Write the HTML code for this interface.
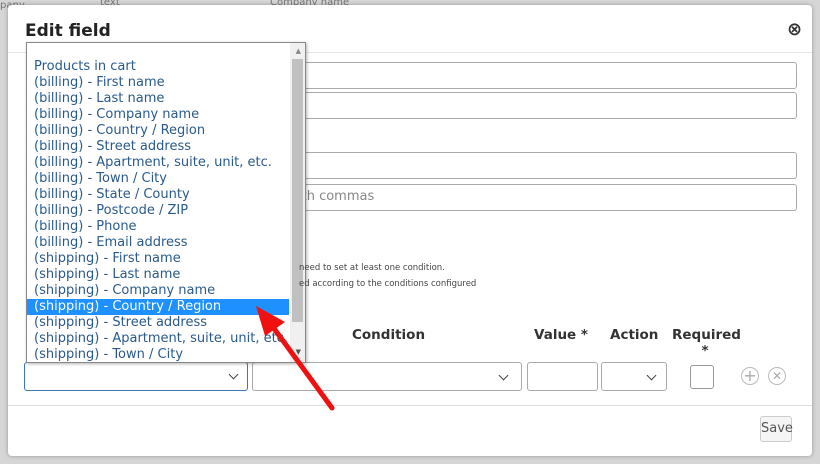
<html><head><style>
body{margin:0;width:820px;height:464px;background:#d6d6d6;font-family:"DejaVu Sans","Liberation Sans",sans-serif;position:relative;overflow:hidden}
.a{position:absolute}
.modal{left:8px;top:5px;width:804px;height:451px;background:#fff;border-radius:4px;box-shadow:0 0 4px rgba(0,0,0,.3)}
.inp{border:1px solid #aaa;border-radius:3px;background:#fff;height:25px}
.list{left:26px;top:42px;width:278px;height:319px;background:#fff;border:1px solid #888;box-shadow:1px 1px 3px rgba(0,0,0,.3);overflow:hidden}
.it{position:absolute;left:0;width:255px;padding-left:7px;height:16px;line-height:16px;font-size:13px;color:#2a5a8a;white-space:nowrap}
.sel{background:#1e90ff;color:#fff}
.h{font-weight:bold;font-size:13.5px;color:#333}
.chev{position:absolute;width:6px;height:6px;border-right:1.5px solid #444;border-bottom:1.5px solid #444;transform:rotate(45deg)}
</style></head><body>
<div class="a" style="left:0;top:0;font-size:10px;color:#777">pany</div>
<div class="a" style="left:100px;top:-3px;font-size:10px;color:#777">text</div>
<div class="a" style="left:270px;top:-3px;font-size:10px;color:#777">Company name</div>
<div class="a modal"></div>
<div class="a" style="left:25px;top:21px;font-size:17px;font-weight:bold;color:#222">Edit field</div>
<div class="a" style="left:787px;top:19px;font-size:18px;font-weight:bold;color:#333">⊗</div>
<div class="a" style="left:8px;top:52px;width:804px;height:1px;background:#e6e6e6"></div>
<div class="a inp" style="left:290px;top:62px;width:505px"></div>
<div class="a inp" style="left:290px;top:92px;width:505px"></div>
<div class="a inp" style="left:290px;top:152px;width:505px"></div>
<div class="a inp" style="left:290px;top:184px;width:505px"></div>
<div class="a" style="left:298px;top:189px;font-size:13px;color:#888">ith commas</div>
<div class="a h" style="left:352px;top:327px">Condition</div>
<div class="a h" style="left:534px;top:327px">Value *</div>
<div class="a h" style="left:610px;top:327px">Action</div>
<div class="a h" style="left:672px;top:327px;width:66px;text-align:center;line-height:16px">Required<br>*</div>
<div class="a inp" style="left:24px;top:362px;width:222px;height:27px;border:1.5px solid #3a78b5"></div>
<div class="chev" style="left:230px;top:371px"></div>
<div class="a inp" style="left:252px;top:362px;width:268px;height:27px"></div>
<div class="chev" style="left:500px;top:372px"></div>
<div class="a inp" style="left:527px;top:362px;width:69px;height:27px"></div>
<div class="a inp" style="left:601px;top:362px;width:64px;height:27px"></div>
<div class="chev" style="left:648px;top:372px"></div>
<div class="a" style="left:690px;top:365px;width:22px;height:22px;border:1px solid #999;border-radius:3px"></div>
<div class="a" style="left:741px;top:367px;width:16px;height:16px;border:1px solid #bbb;border-radius:50%;color:#aaa;font-size:16px;line-height:15px;text-align:center">+</div>
<div class="a" style="left:768px;top:367px;width:16px;height:16px;border:1px solid #bbb;border-radius:50%;color:#aaa;font-size:12px;line-height:16px;text-align:center">✕</div>
<div class="a" style="left:8px;top:405px;width:804px;height:1px;background:#ddd"></div>
<div class="a" style="left:760px;top:416px;width:30px;height:24px;border:1px solid #ccc;border-radius:3px;background:#f5f5f5;font-size:13px;color:#555;line-height:24px;text-align:center">Save</div>
<div class="a list">
<div class="a" style="right:0;top:0;width:15px;height:319px;background:#f0f0f0"></div>
<div class="a" style="right:2px;top:16px;width:11px;height:263px;background:#c0c0c0"></div>
<div class="a" style="right:4px;top:4px;font-size:7px;color:#888">▲</div>
<div class="a" style="right:4px;top:305px;font-size:7px;color:#555">▼</div>
<div class="it" style="top:16px">Products in cart</div>
<div class="it" style="top:32px">(billing) - First name</div>
<div class="it" style="top:48px">(billing) - Last name</div>
<div class="it" style="top:64px">(billing) - Company name</div>
<div class="it" style="top:80px">(billing) - Country / Region</div>
<div class="it" style="top:96px">(billing) - Street address</div>
<div class="it" style="top:112px">(billing) - Apartment, suite, unit, etc.</div>
<div class="it" style="top:128px">(billing) - Town / City</div>
<div class="it" style="top:144px">(billing) - State / County</div>
<div class="it" style="top:160px">(billing) - Postcode / ZIP</div>
<div class="it" style="top:176px">(billing) - Phone</div>
<div class="it" style="top:192px">(billing) - Email address</div>
<div class="it" style="top:208px">(shipping) - First name</div>
<div class="it" style="top:224px">(shipping) - Last name</div>
<div class="it" style="top:240px">(shipping) - Company name</div>
<div class="it sel" style="top:256px">(shipping) - Country / Region</div>
<div class="it" style="top:272px">(shipping) - Street address</div>
<div class="it" style="top:288px">(shipping) - Apartment, suite, unit, etc.</div>
<div class="it" style="top:304px">(shipping) - Town / City</div>
</div>
<div class="a" style="left:299px;top:263px;font-size:8.5px;color:#444">need to set at least one condition.</div>
<div class="a" style="left:299px;top:279px;font-size:8.5px;color:#444">ed according to the conditions configured</div>
<svg class="a" style="left:0;top:0" width="820" height="464"><line x1="332" y1="408" x2="270" y2="323" stroke="#f01010" stroke-width="5" stroke-linecap="round"/><polygon points="256,306 285,322 265,336" fill="#f01010"/></svg>
</body></html>
